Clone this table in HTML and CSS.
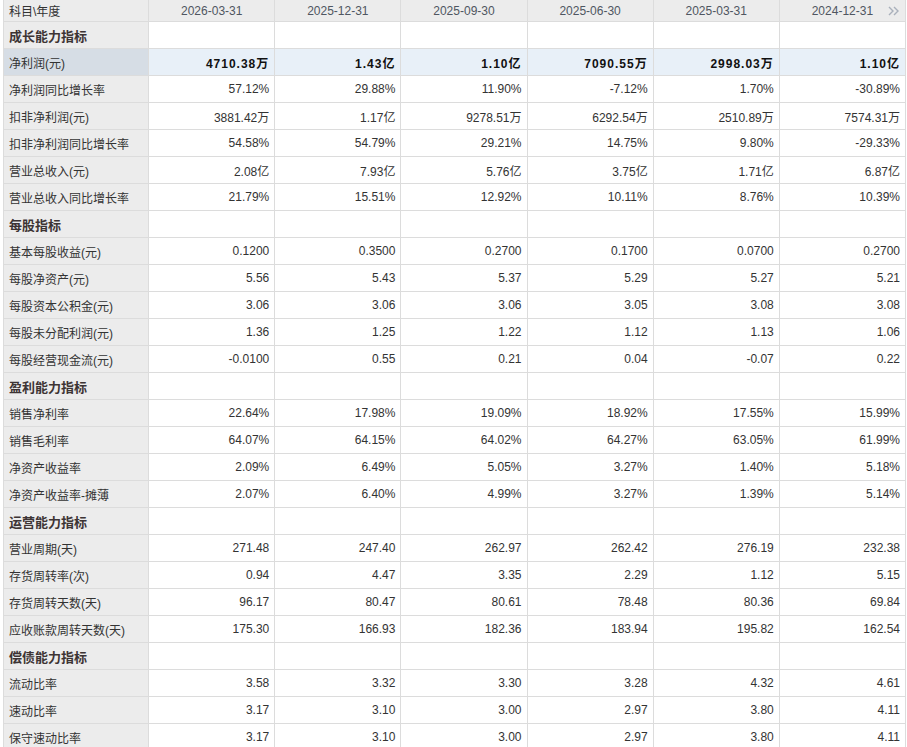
FILE: index.html
```html
<!DOCTYPE html>
<html lang="zh-CN">
<head>
<meta charset="utf-8">
<title>财务指标</title>
<link rel="stylesheet" href="styles.css">
</head>
<body>
<div class="wrap">
<table class="fin">
<colgroup>
<col class="c-name"><col class="c-val"><col class="c-val"><col class="c-val"><col class="c-val"><col class="c-val"><col class="c-val">
</colgroup>
<thead>
<tr class="head">
<th class="name">科目\年度</th><th>2026-03-31</th><th>2025-12-31</th><th>2025-09-30</th><th>2025-06-30</th><th>2025-03-31</th><th class="last">2024-12-31<span class="more"><svg width="12" height="10" viewBox="0 0 12 10"><path d="M1 1 L5 5 L1 9 M6 1 L10 5 L6 9" fill="none" stroke="#a9b0bb" stroke-width="1.4"/></svg></span></th>
</tr>
</thead>
<tbody>
<tr class="sec"><td class="name">成长能力指标</td><td></td><td></td><td></td><td></td><td></td><td></td></tr>
<tr class="hl"><td class="name">净利润(元)</td><td>4710.38万</td><td>1.43亿</td><td>1.10亿</td><td>7090.55万</td><td>2998.03万</td><td>1.10亿</td></tr>
<tr><td class="name">净利润同比增长率</td><td>57.12%</td><td>29.88%</td><td>11.90%</td><td>-7.12%</td><td>1.70%</td><td>-30.89%</td></tr>
<tr><td class="name">扣非净利润(元)</td><td>3881.42万</td><td>1.17亿</td><td>9278.51万</td><td>6292.54万</td><td>2510.89万</td><td>7574.31万</td></tr>
<tr><td class="name">扣非净利润同比增长率</td><td>54.58%</td><td>54.79%</td><td>29.21%</td><td>14.75%</td><td>9.80%</td><td>-29.33%</td></tr>
<tr><td class="name">营业总收入(元)</td><td>2.08亿</td><td>7.93亿</td><td>5.76亿</td><td>3.75亿</td><td>1.71亿</td><td>6.87亿</td></tr>
<tr><td class="name">营业总收入同比增长率</td><td>21.79%</td><td>15.51%</td><td>12.92%</td><td>10.11%</td><td>8.76%</td><td>10.39%</td></tr>
<tr class="sec"><td class="name">每股指标</td><td></td><td></td><td></td><td></td><td></td><td></td></tr>
<tr><td class="name">基本每股收益(元)</td><td>0.1200</td><td>0.3500</td><td>0.2700</td><td>0.1700</td><td>0.0700</td><td>0.2700</td></tr>
<tr><td class="name">每股净资产(元)</td><td>5.56</td><td>5.43</td><td>5.37</td><td>5.29</td><td>5.27</td><td>5.21</td></tr>
<tr><td class="name">每股资本公积金(元)</td><td>3.06</td><td>3.06</td><td>3.06</td><td>3.05</td><td>3.08</td><td>3.08</td></tr>
<tr><td class="name">每股未分配利润(元)</td><td>1.36</td><td>1.25</td><td>1.22</td><td>1.12</td><td>1.13</td><td>1.06</td></tr>
<tr><td class="name">每股经营现金流(元)</td><td>-0.0100</td><td>0.55</td><td>0.21</td><td>0.04</td><td>-0.07</td><td>0.22</td></tr>
<tr class="sec"><td class="name">盈利能力指标</td><td></td><td></td><td></td><td></td><td></td><td></td></tr>
<tr><td class="name">销售净利率</td><td>22.64%</td><td>17.98%</td><td>19.09%</td><td>18.92%</td><td>17.55%</td><td>15.99%</td></tr>
<tr><td class="name">销售毛利率</td><td>64.07%</td><td>64.15%</td><td>64.02%</td><td>64.27%</td><td>63.05%</td><td>61.99%</td></tr>
<tr><td class="name">净资产收益率</td><td>2.09%</td><td>6.49%</td><td>5.05%</td><td>3.27%</td><td>1.40%</td><td>5.18%</td></tr>
<tr><td class="name">净资产收益率-摊薄</td><td>2.07%</td><td>6.40%</td><td>4.99%</td><td>3.27%</td><td>1.39%</td><td>5.14%</td></tr>
<tr class="sec"><td class="name">运营能力指标</td><td></td><td></td><td></td><td></td><td></td><td></td></tr>
<tr><td class="name">营业周期(天)</td><td>271.48</td><td>247.40</td><td>262.97</td><td>262.42</td><td>276.19</td><td>232.38</td></tr>
<tr><td class="name">存货周转率(次)</td><td>0.94</td><td>4.47</td><td>3.35</td><td>2.29</td><td>1.12</td><td>5.15</td></tr>
<tr><td class="name">存货周转天数(天)</td><td>96.17</td><td>80.47</td><td>80.61</td><td>78.48</td><td>80.36</td><td>69.84</td></tr>
<tr><td class="name">应收账款周转天数(天)</td><td>175.30</td><td>166.93</td><td>182.36</td><td>183.94</td><td>195.82</td><td>162.54</td></tr>
<tr class="sec"><td class="name">偿债能力指标</td><td></td><td></td><td></td><td></td><td></td><td></td></tr>
<tr><td class="name">流动比率</td><td>3.58</td><td>3.32</td><td>3.30</td><td>3.28</td><td>4.32</td><td>4.61</td></tr>
<tr><td class="name">速动比率</td><td>3.17</td><td>3.10</td><td>3.00</td><td>2.97</td><td>3.80</td><td>4.11</td></tr>
<tr><td class="name">保守速动比率</td><td>3.17</td><td>3.10</td><td>3.00</td><td>2.97</td><td>3.80</td><td>4.11</td></tr>
</tbody>
</table>
</div>
</body>
</html>
```
FILE: styles.css
```css
html, body {
  margin: 0;
  padding: 0;
  background: #fff;
}
.wrap {
  padding-left: 3px;
}
.fin {
  border-collapse: collapse;
  table-layout: fixed;
  width: 903px;
  font-family: "Liberation Sans", "Noto Sans CJK SC", sans-serif;
  font-size: 12px;
  color: #333;
}
.c-name { width: 145px; }
.c-val { width: 126px; }
.fin th, .fin td {
  border: 1px solid #dcdcdc;
  padding: 0 5px;
  white-space: nowrap;
  overflow: hidden;
}
.fin th {
  height: 21px;
  background: #ececec;
  font-weight: normal;
  color: #4f5661;
  text-align: center;
  border-top: none;
}
.fin th.name {
  text-align: left;
  color: #333;
}
.fin th.last {
  position: relative;
}
.more {
  position: absolute;
  right: 5px;
  top: 6px;
  line-height: 0;
}
.fin td {
  height: 26px;
  text-align: right;
}
.fin td.name {
  text-align: left;
  background: #ececec;
}
.sec td.name {
  font-weight: bold;
  color: #3d3434;
  font-size: 13px;
}
.hl td {
  background: #e8f0f8;
  font-weight: bold;
  color: #111;
  letter-spacing: 1px;
}
.hl td.name {
  background: #d6dde5;
  font-weight: normal;
  color: #333;
  letter-spacing: 0;
}
```
